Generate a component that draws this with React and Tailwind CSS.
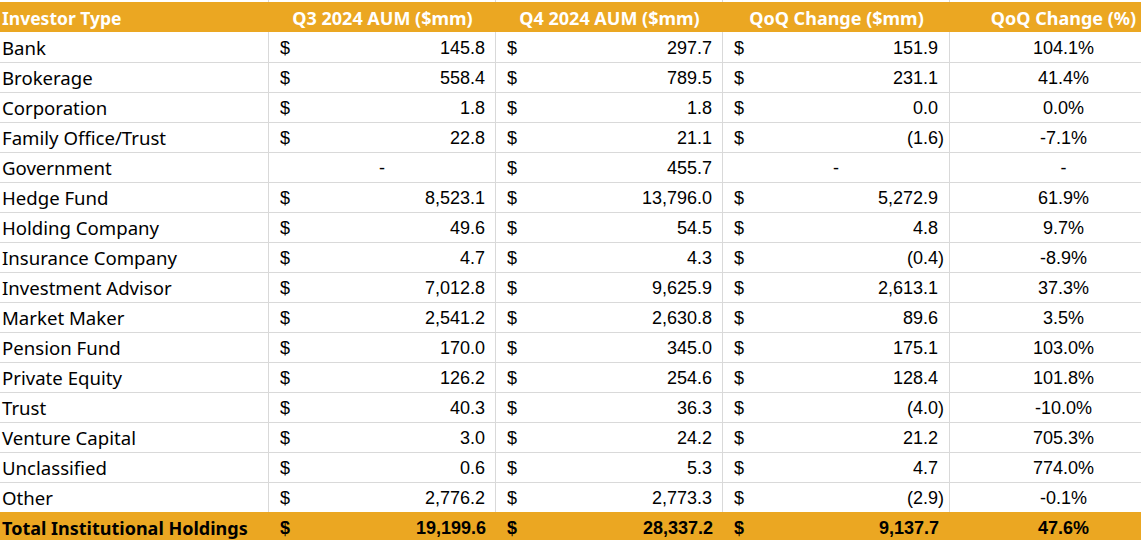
const rows = [
  ["Bank", "145.8", "297.7", "151.9", "104.1%"],
  ["Brokerage", "558.4", "789.5", "231.1", "41.4%"],
  ["Corporation", "1.8", "1.8", "0.0", "0.0%"],
  ["Family Office/Trust", "22.8", "21.1", "(1.6)", "-7.1%"],
  ["Government", null, "455.7", null, "-"],
  ["Hedge Fund", "8,523.1", "13,796.0", "5,272.9", "61.9%"],
  ["Holding Company", "49.6", "54.5", "4.8", "9.7%"],
  ["Insurance Company", "4.7", "4.3", "(0.4)", "-8.9%"],
  ["Investment Advisor", "7,012.8", "9,625.9", "2,613.1", "37.3%"],
  ["Market Maker", "2,541.2", "2,630.8", "89.6", "3.5%"],
  ["Pension Fund", "170.0", "345.0", "175.1", "103.0%"],
  ["Private Equity", "126.2", "254.6", "128.4", "101.8%"],
  ["Trust", "40.3", "36.3", "(4.0)", "-10.0%"],
  ["Venture Capital", "3.0", "24.2", "21.2", "705.3%"],
  ["Unclassified", "0.6", "5.3", "4.7", "774.0%"],
  ["Other", "2,776.2", "2,773.3", "(2.9)", "-0.1%"],
];

const label = { fontFamily: "'Noto Sans', sans-serif" };
const num = { fontFamily: "'Liberation Sans', Arial, sans-serif" };

function Money({ value, pr, paren }) {
  if (value === null) {
    return <div className="flex items-center justify-center h-full pt-[3px]">-</div>;
  }
  const neg = value.startsWith("(");
  return (
    <div className={`flex items-center justify-between h-full pt-[3px] pl-[11px] ${pr}`}>
      <span>$</span>
      <span>
        {value}
        {paren && !neg && <span className="invisible">)</span>}
      </span>
    </div>
  );
}

export default function App() {
  const grid = "grid grid-cols-[269px_227px_227px_227px_227px] w-[1177px]";
  const line = "border-r border-[#D9D9D9]";
  return (
    <div className="w-[1141px] h-[540px] overflow-hidden bg-white text-black">
      <div className={`${grid} h-[2px]`}>
        <div className={line} />
        <div className={line} />
        <div className={line} />
        <div className={line} />
        <div />
      </div>
      <div className={`${grid} h-[30px] bg-[#EBA722] text-white font-bold text-[18px]`} style={label}>
        <div className="flex items-center pl-[2px] pt-[2px] text-[17.5px]">Investor Type</div>
        <div className="flex items-center justify-center pt-[2px]">Q3 2024 AUM ($mm)</div>
        <div className="flex items-center justify-center pt-[2px]">Q4 2024 AUM ($mm)</div>
        <div className="flex items-center justify-center pt-[2px]">QoQ Change ($mm)</div>
        <div className="flex items-center justify-center pt-[2px]">QoQ Change (%)</div>
      </div>
      {rows.map((r, i) => {
        const bb = i < rows.length - 1 ? "border-b" : "";
        const cell = `${line} ${bb} border-[#D9D9D9]`;
        return (
          <div key={r[0]} className={`${grid} h-[30px] text-[18px]`}>
            <div className={`${cell} flex items-center pl-[2px] pt-[1px] text-[18.6px]`} style={label}>{r[0]}</div>
            <div className={cell} style={num}><Money value={r[1]} pr="pr-[10px]" /></div>
            <div className={cell} style={num}><Money value={r[2]} pr="pr-[10px]" /></div>
            <div className={cell} style={num}><Money value={r[3]} pr="pr-[5px]" paren /></div>
            <div className={`${bb} border-[#D9D9D9] flex items-center justify-center pt-[3px]`} style={num}>{r[4]}</div>
          </div>
        );
      })}
      <div className={`${grid} h-[30px] bg-[#EBA722] font-bold text-[18px]`}>
        <div className="flex items-center pl-[2px] pt-[3px]" style={label}>Total Institutional Holdings</div>
        <div style={num}><Money value="19,199.6" pr="pr-[10px]" /></div>
        <div style={num}><Money value="28,337.2" pr="pr-[10px]" /></div>
        <div style={num}><Money value="9,137.7" pr="pr-[5px]" paren /></div>
        <div className="flex items-center justify-center pt-[3px]" style={num}>47.6%</div>
      </div>
    </div>
  );
}
